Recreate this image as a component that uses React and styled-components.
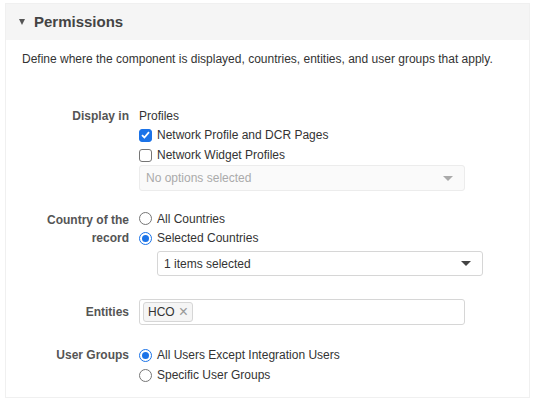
import styled, { createGlobalStyle } from 'styled-components';

const Global = createGlobalStyle`
  body {
    margin: 0;
    background: #fff;
    font-family: "Liberation Sans", Arial, sans-serif;
    font-size: 12px;
    color: #333;
  }
`;

const Panel = styled.section`
  margin: 3px 4px 0 5px;
  border: 1px solid #f0f0f0;
  height: 395px;
  box-sizing: border-box;
`;

const Header = styled.div`
  display: flex;
  align-items: center;
  gap: 9px;
  height: 36px;
  padding: 0 0 1px 13px;
  box-sizing: border-box;
  background: #f5f5f5;
  font-size: 15px;
  font-weight: bold;
  color: #444;
`;

const Caret = styled.span`
  width: 0;
  height: 0;
  border-left: 3.5px solid transparent;
  border-right: 3.5px solid transparent;
  border-top: 6px solid #555;
  margin-top: 1px;
`;

const Intro = styled.p`
  margin: 0;
  padding: 11px 0 0 16px;
  line-height: 16px;
`;

const Form = styled.div`
  padding: 40px 0 0 13px;
`;

const Row = styled.div`
  display: grid;
  grid-template-columns: 110px 1fr;
  column-gap: 10px;
  margin-top: ${p => p.$top || 0}px;
`;

const Label = styled.div`
  text-align: right;
  font-weight: bold;
  color: #555;
  line-height: 18px;
  padding-top: ${p => p.$pad || 0}px;
`;

const Field = styled.div`
  display: flex;
  flex-direction: column;
`;

const Plain = styled.div`
  line-height: 18px;
`;

const Option = styled.label`
  display: flex;
  align-items: center;
  gap: 5px;
  height: ${p => p.$h || 20}px;
`;

const Box = styled.span`
  width: 13px;
  height: 13px;
  box-sizing: border-box;
  border-radius: 3px;
  border: 1px solid ${p => (p.$on ? '#1b73e8' : '#767676')};
  background: ${p => (p.$on ? '#1b73e8' : '#fff')};
  display: flex;
  align-items: center;
  justify-content: center;
`;

const Radio = styled.span`
  width: 13px;
  height: 13px;
  box-sizing: border-box;
  border-radius: 50%;
  border: 1px solid ${p => (p.$on ? '#1b73e8' : '#767676')};
  background: #fff;
  display: flex;
  align-items: center;
  justify-content: center;
  &::after {
    content: '';
    width: 7px;
    height: 7px;
    border-radius: 50%;
    background: ${p => (p.$on ? '#1b73e8' : 'transparent')};
  }
`;

const Select = styled.div`
  display: flex;
  align-items: center;
  justify-content: space-between;
  box-sizing: border-box;
  width: 326px;
  height: ${p => p.$h || 26}px;
  margin: ${p => p.$margin || '0'};
  padding: 0 11px 0 6px;
  border: 1px solid ${p => (p.$disabled ? '#ececec' : '#d6d6d6')};
  border-radius: 3px;
  background: ${p => (p.$disabled ? '#fafafa' : '#fff')};
  color: ${p => (p.$disabled ? '#aaa' : '#333')};
`;

const Arrow = styled.span`
  width: 0;
  height: 0;
  border-left: 5px solid transparent;
  border-right: 5px solid transparent;
  border-top: 5px solid ${p => (p.$disabled ? '#aaa' : '#444')};
`;

const Tags = styled.div`
  display: flex;
  align-items: center;
  box-sizing: border-box;
  width: 326px;
  height: 26px;
  padding: 0 3px;
  border: 1px solid #d6d6d6;
  border-radius: 3px;
`;

const Tag = styled.span`
  display: flex;
  align-items: center;
  gap: 4px;
  height: 18px;
  padding: 0 4px;
  border: 1px solid #d6d6d6;
  border-radius: 3px;
  background: #f5f5f5;
  color: #333;
`;

const Close = styled.span`
  color: #999;
  font-size: 16px;
  line-height: 1;
`;

const Check = () => (
  <svg width="9" height="8" viewBox="0 0 9 8">
    <path d="M1 4.2 L3.4 6.5 L8 1.2" fill="none" stroke="#fff" strokeWidth="1.8" />
  </svg>
);

export default function App() {
  return (
    <>
      <Global />
      <Panel>
        <Header>
          <Caret />
          Permissions
        </Header>
        <Intro>Define where the component is displayed, countries, entities, and user groups that apply.</Intro>
        <Form>
          <Row>
            <Label>Display in</Label>
            <Field>
              <Plain>Profiles</Plain>
              <Option>
                <Box $on><Check /></Box>
                Network Profile and DCR Pages
              </Option>
              <Option>
                <Box />
                Network Widget Profiles
              </Option>
              <Select $disabled>
                No options selected
                <Arrow $disabled />
              </Select>
            </Field>
          </Row>
          <Row $top={18}>
            <Label $pad={2}>Country of the<br />record</Label>
            <Field>
              <Option $h={19}>
                <Radio />
                All Countries
              </Option>
              <Option>
                <Radio $on />
                Selected Countries
              </Option>
              <Select $margin="3px 0 0 18px" $h={25}>
                1 items selected
                <Arrow />
              </Select>
            </Field>
          </Row>
          <Row $top={23}>
            <Label $pad={4}>Entities</Label>
            <Field>
              <Tags>
                <Tag>
                  HCO
                  <Close>×</Close>
                </Tag>
              </Tags>
            </Field>
          </Row>
          <Row $top={20}>
            <Label $pad={1}>User Groups</Label>
            <Field>
              <Option>
                <Radio $on />
                All Users Except Integration Users
              </Option>
              <Option>
                <Radio />
                Specific User Groups
              </Option>
            </Field>
          </Row>
        </Form>
      </Panel>
    </>
  );
}
